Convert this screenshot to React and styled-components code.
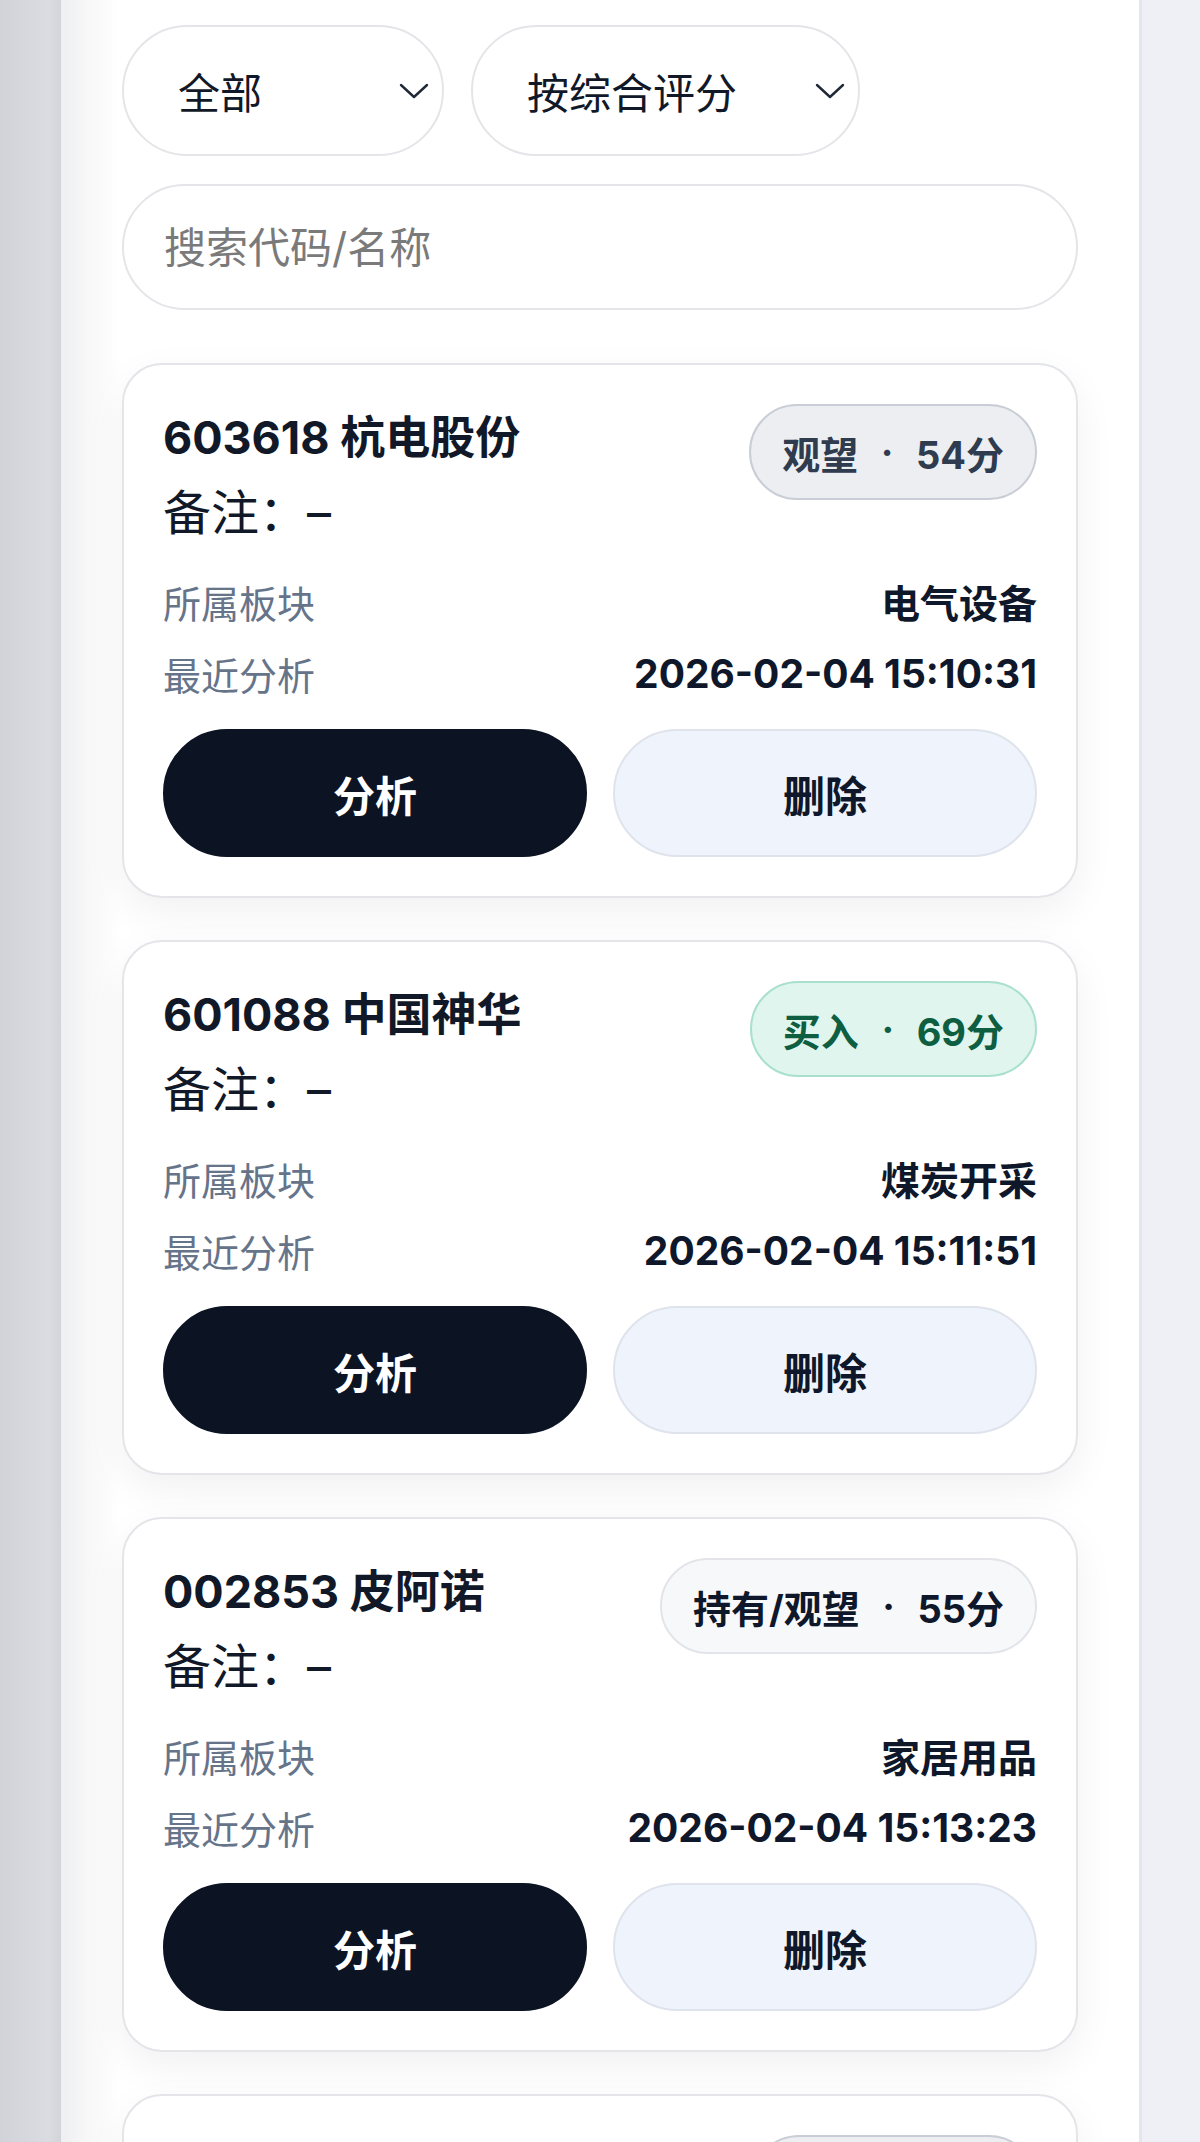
import styled, { createGlobalStyle, css } from "styled-components";

const GlobalStyle = createGlobalStyle`
  html, body {
    margin: 0;
    padding: 0;
  }
  body {
    background: #fff;
    font-family: Inter, "Noto Sans CJK SC", "Noto Sans", sans-serif;
    color: #0f172a;
  }
  * {
    box-sizing: border-box;
  }
`;

const Page = styled.div`
  display: flex;
  min-height: 2142px;
`;

const LeftRail = styled.div`
  flex: 0 0 61px;
  background: linear-gradient(90deg, #d1d3d8 0%, #dadce1 80%, #d2d4d9 100%);
`;

const RightRail = styled.div`
  flex: 0 0 61px;
  background: #eff0f5;
  border-left: 3px solid #e5e6ec;
`;

const Main = styled.main`
  flex: 1;
  display: flex;
  flex-direction: column;
  padding: 25px 61px 0;
  background: linear-gradient(90deg, #eeeff1 0, #f7f7f8 25px, #fff 60px);
`;

const FilterRow = styled.div`
  display: flex;
  gap: 27px;
  margin-bottom: 28px;
`;

const Select = styled.div`
  width: ${(p) => p.$width}px;
  height: 131px;
  display: flex;
  align-items: center;
  justify-content: space-between;
  padding: 0 13px 0 54px;
  border: 2px solid #e4e5e8;
  border-radius: 999px;
  background: #fff;
  font-size: 42px;
  color: #111827;

  svg {
    flex: none;
  }
`;

const Search = styled.input`
  width: 100%;
  height: 126px;
  padding: 0 40px;
  margin: 0 0 53px;
  border: 2px solid #e4e5e8;
  border-radius: 999px;
  background: #fff;
  font-family: inherit;
  font-size: 42px;
  color: #111827;
  outline: none;

  &::placeholder {
    color: #7a7a7a;
  }
`;

const CardList = styled.div`
  display: flex;
  flex-direction: column;
  gap: 42px;
`;

const Card = styled.div`
  background: #fff;
  border: 2px solid #e3e5e9;
  border-radius: 40px;
  padding: 39px;
  box-shadow: 0 14px 40px rgba(15, 23, 42, 0.06);
`;

const Header = styled.div`
  display: flex;
  justify-content: space-between;
  align-items: flex-start;
`;

const TitleBlock = styled.div`
  display: flex;
  flex-direction: column;
`;

const Title = styled.div`
  margin-top: 4px;
  font-size: 45px;
  line-height: 60px;
  font-weight: 700;
  color: #111827;
`;

const Note = styled.div`
  margin-top: 15px;
  font-size: 48px;
  line-height: 60px;
  color: #111827;
`;

const tones = {
  neutral: css`
    background: #eceef2;
    border-color: #c9ced6;
    color: #2f3b4e;
  `,
  buy: css`
    background: #e0f5ee;
    border-color: #a8e0cc;
    color: #0e5e41;
  `,
  hold: css`
    background: #f7f8fa;
    border-color: #e2e4e9;
    color: #0f172a;
  `,
};

const Badge = styled.div`
  flex: none;
  display: inline-flex;
  align-items: center;
  height: 96px;
  padding: 0 31px;
  border: 2px solid;
  border-radius: 999px;
  font-size: 38px;
  font-weight: 700;
  white-space: nowrap;
  ${(p) => tones[p.$tone]}
`;

const Sep = styled.span`
  display: inline-block;
  width: 1em;
  margin: 0 0.26em;
  text-align: center;
`;

const Info = styled.div`
  display: flex;
  flex-direction: column;
  gap: 22px;
  margin-top: 33px;
`;

const InfoRow = styled.div`
  display: flex;
  justify-content: space-between;
  align-items: center;
  height: 50px;
  font-size: 38px;
`;

const Label = styled.span`
  color: #66748a;
`;

const Value = styled.span`
  font-size: 39px;
  font-weight: 700;
  color: #0f172a;
`;

const Actions = styled.div`
  display: grid;
  grid-template-columns: 1fr 1fr;
  gap: 26px;
  margin-top: 31px;
`;

const ActionButton = styled.button`
  height: 128px;
  border-radius: 999px;
  border: 2px solid ${(p) => (p.$primary ? "#0c1322" : "#dfe3eb")};
  background: ${(p) => (p.$primary ? "#0c1322" : "#eff3fb")};
  color: ${(p) => (p.$primary ? "#fff" : "#0f172a")};
  font-family: inherit;
  font-size: 42px;
  font-weight: 700;
  cursor: pointer;
`;

const Chevron = () => (
  <svg width="30" height="18" viewBox="0 0 30 18" fill="none">
    <polyline
      points="2,3 15,15 28,3"
      stroke="#1f2937"
      strokeWidth="2.4"
      strokeLinecap="round"
      strokeLinejoin="round"
    />
  </svg>
);

const stocks = [
  { code: "603618", name: "杭电股份", rating: "观望", score: 54, tone: "neutral", sector: "电气设备", time: "2026-02-04 15:10:31" },
  { code: "601088", name: "中国神华", rating: "买入", score: 69, tone: "buy", sector: "煤炭开采", time: "2026-02-04 15:11:51" },
  { code: "002853", name: "皮阿诺", rating: "持有/观望", score: 55, tone: "hold", sector: "家居用品", time: "2026-02-04 15:13:23" },
  { code: "600519", name: "贵州茅台", rating: "观望", score: 52, tone: "neutral", sector: "白酒", time: "2026-02-04 15:15:02" },
];

function StockCard({ stock }) {
  return (
    <Card>
      <Header>
        <TitleBlock>
          <Title>
            {stock.code} {stock.name}
          </Title>
          <Note>备注：–</Note>
        </TitleBlock>
        <Badge $tone={stock.tone}>
          {stock.rating}
          <Sep>·</Sep>
          {stock.score}分
        </Badge>
      </Header>
      <Info>
        <InfoRow>
          <Label>所属板块</Label>
          <Value>{stock.sector}</Value>
        </InfoRow>
        <InfoRow>
          <Label>最近分析</Label>
          <Value>{stock.time}</Value>
        </InfoRow>
      </Info>
      <Actions>
        <ActionButton $primary>分析</ActionButton>
        <ActionButton>删除</ActionButton>
      </Actions>
    </Card>
  );
}

export default function App() {
  return (
    <>
      <GlobalStyle />
      <Page>
        <LeftRail />
        <Main>
          <FilterRow>
            <Select $width={322}>
              全部
              <Chevron />
            </Select>
            <Select $width={389}>
              按综合评分
              <Chevron />
            </Select>
          </FilterRow>
          <Search placeholder="搜索代码/名称" />
          <CardList>
            {stocks.map((s) => (
              <StockCard key={s.code} stock={s} />
            ))}
          </CardList>
        </Main>
        <RightRail />
      </Page>
    </>
  );
}
